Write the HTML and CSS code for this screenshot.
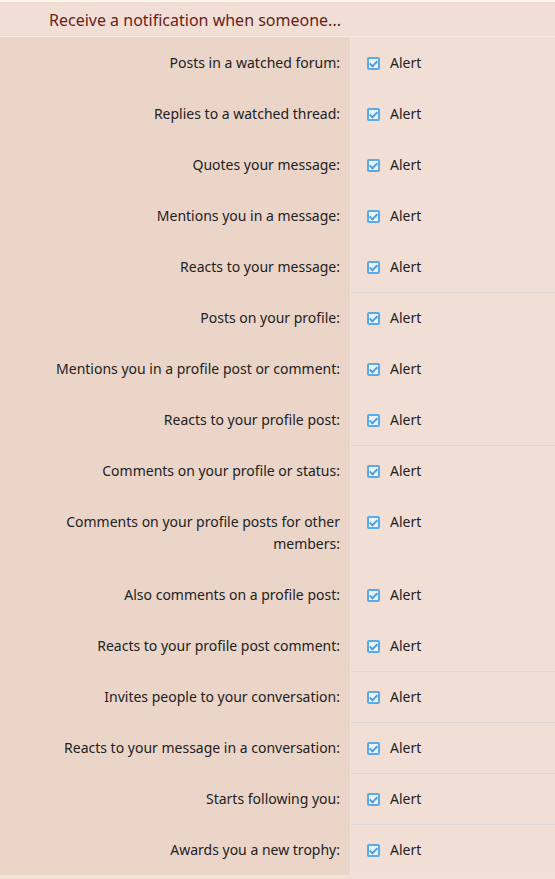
FILE: index.html
```html
<!DOCTYPE html>
<html>
<head>
<meta charset="utf-8">
<link rel="stylesheet" href="styles.css">
</head>
<body>
<div class="page">
  <div class="topstrip"></div>
  <h3 class="header">Receive a notification when someone...</h3>
  <dl class="rows">
    <div class="row"><dt>Posts in a watched forum:</dt><dd><span class="cb"></span>Alert</dd></div>
    <div class="row"><dt>Replies to a watched thread:</dt><dd><span class="cb"></span>Alert</dd></div>
    <div class="row"><dt>Quotes your message:</dt><dd><span class="cb"></span>Alert</dd></div>
    <div class="row"><dt>Mentions you in a message:</dt><dd><span class="cb"></span>Alert</dd></div>
    <div class="row"><dt>Reacts to your message:</dt><dd><span class="cb"></span>Alert</dd></div>
    <div class="row sep"><dt>Posts on your profile:</dt><dd><span class="cb"></span>Alert</dd></div>
    <div class="row"><dt>Mentions you in a profile post or comment:</dt><dd><span class="cb"></span>Alert</dd></div>
    <div class="row"><dt>Reacts to your profile post:</dt><dd><span class="cb"></span>Alert</dd></div>
    <div class="row sep"><dt>Comments on your profile or status:</dt><dd><span class="cb"></span>Alert</dd></div>
    <div class="row"><dt>Comments on your profile posts for other members:</dt><dd><span class="cb"></span>Alert</dd></div>
    <div class="row"><dt>Also comments on a profile post:</dt><dd><span class="cb"></span>Alert</dd></div>
    <div class="row"><dt>Reacts to your profile post comment:</dt><dd><span class="cb"></span>Alert</dd></div>
    <div class="row sep"><dt>Invites people to your conversation:</dt><dd><span class="cb"></span>Alert</dd></div>
    <div class="row sep"><dt>Reacts to your message in a conversation:</dt><dd><span class="cb"></span>Alert</dd></div>
    <div class="row sep"><dt>Starts following you:</dt><dd><span class="cb"></span>Alert</dd></div>
    <div class="row sep"><dt>Awards you a new trophy:</dt><dd><span class="cb"></span>Alert</dd></div>
  </dl>
</div>
</body>
</html>
```
FILE: styles.css
```css
html, body {
  margin: 0;
  padding: 0;
  background: #f2e0d6;
}
.page {
  font-family: "Noto Sans", "Open Sans", sans-serif;
  font-size: 14px;
  color: #222;
}
.topstrip {
  height: 2px;
  background: #fdf6e9;
}
.header {
  margin: 0;
  height: 35px;
  box-sizing: border-box;
  padding: 6px 0 0 49px;
  font-size: 16px;
  font-weight: normal;
  line-height: 24px;
  color: #6b1c1c;
  background: #f1dfd5;
  border-bottom: 1px solid #f6ebe5;
}
.rows {
  margin: 0;
}
.row {
  display: grid;
  grid-template-columns: 350px 1fr;
}
.row dt {
  background: #ebd5c9;
  text-align: right;
  padding: 15px 10px 14px 40px;
  line-height: 22px;
}
.row dd {
  margin: 0;
  background: #f1dfd5;
  border-left: 1px solid #f3e5de;
  padding: 15px 10px 14px 16px;
  line-height: 22px;
  display: flex;
  align-items: flex-start;
  gap: 10px;
}
.row.sep dd {
  box-shadow: inset 0 1px 0 #dcd5d8;
}
.cb {
  width: 13px;
  height: 13px;
  box-sizing: border-box;
  margin-top: 5px;
  border: 2px solid #58aae9;
  border-radius: 2px;
  background: #eef3fb;
  position: relative;
  flex: none;
}
.cb::after {
  content: "";
  position: absolute;
  left: 2px;
  top: 0px;
  width: 3px;
  height: 6px;
  border: solid #4aa0e4;
  border-width: 0 2px 2px 0;
  transform: rotate(45deg);
}
```
